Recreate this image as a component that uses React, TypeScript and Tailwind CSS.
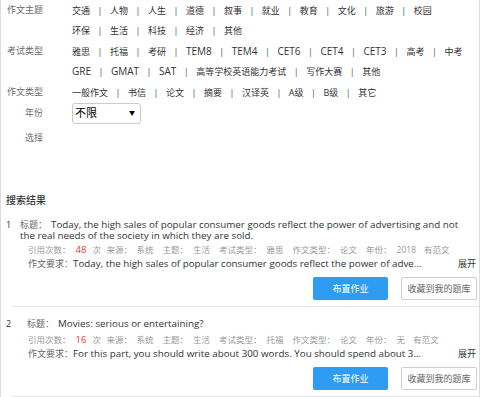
import React from 'react'

const font = "font-['Open_Sans','Noto_Sans_CJK_SC',sans-serif]"

const filters = [
    {
        label: '作文主题',
        rows: [
            ['交通', '人物', '人生', '道德', '叙事', '就业', '教育', '文化', '旅游', '校园'],
            ['环保', '生活', '科技', '经济', '其他'],
        ],
    },
    {
        label: '考试类型',
        rows: [
            ['雅思', '托福', '考研', 'TEM8', 'TEM4', 'CET6', 'CET4', 'CET3', '高考', '中考'],
            ['GRE', 'GMAT', 'SAT', '高等学校英语能力考试', '写作大赛', '其他'],
        ],
    },
    {
        label: '作文类型',
        rows: [['一般作文', '书信', '论文', '摘要', '汉译英', 'A级', 'B级', '其它']],
    },
]

const results = [
    {
        no: 1,
        title: 'Today, the high sales of popular consumer goods reflect the power of advertising and not the real needs of the society in which they are sold.',
        count: '48',
        exam: '雅思',
        year: '2018',
        req: 'Today, the high sales of popular consumer goods reflect the power of adve...',
        titleIndent: 'pl-0',
        top: 'mt-[12px]',
        metaTop: 'mt-[2.5px]',
    },
    {
        no: 2,
        title: 'Movies: serious or entertaining?',
        count: '16',
        exam: '托福',
        year: '无',
        req: 'For this part, you should write about 300 words. You should spend about 3...',
        titleIndent: 'pl-[7px]',
        top: 'mt-[10.5px]',
        metaTop: 'mt-[4.5px]',
    },
]

const Meta = ({ label, value }: { label: string; value: string }) => (
    <>
        <span className="ml-[9px]">{label}：</span>
        <span className="ml-[5px]">{value}</span>
    </>
)

const App: React.FC = () => {
    return (
        <div className={`w-[480px] h-[397px] overflow-hidden bg-white border-x border-[#dcdcdc] ${font}`}>
            {filters.map((f) => (
                <div key={f.label} className="flex">
                    <div className="w-[42px] shrink-0 text-right text-[9px] leading-[20.5px] text-[#6b6b6b]">{f.label}</div>
                    <div className="ml-[29px] flex flex-col">
                        {f.rows.map((row, i) => (
                            <div key={i} className="flex h-[20.5px] items-center text-[9px] text-[#333]">
                                {row.map((t, idx) => (
                                    <React.Fragment key={t}>
                                        {idx > 0 && <span className="mx-[7.5px] text-[#555]">|</span>}
                                        <span className={/^[A-Z]{2}/.test(t) ? 'text-[10px]' : ''}>{t}</span>
                                    </React.Fragment>
                                ))}
                            </div>
                        ))}
                    </div>
                </div>
            ))}

            <div className="flex items-center">
                <div className="w-[42px] shrink-0 text-right text-[9px] text-[#6b6b6b]">年份</div>
                <div className="ml-[29px] flex h-[21px] w-[69px] items-center justify-between rounded-[3px] border border-[#ccc] pl-[2px] pr-[5px] text-[11px] text-black">
                    <span>不限</span>
                    <span className="text-[6px]">▼</span>
                </div>
            </div>
            <div className="mt-[4px] flex h-[21px] items-center">
                <div className="w-[42px] shrink-0 text-right text-[9px] text-[#6b6b6b]">选择</div>
            </div>

            <div className="mt-[44px] h-[14px] pl-[5px] text-[10px] font-medium leading-[14px] text-[#333]">搜索结果</div>

            {results.map((r) => (
                <div key={r.no}>
                    <div className={`${r.top} flex text-[9px] leading-[11px]`}>
                        <div className="w-[19px] shrink-0 pl-[5px] text-[#333]">{r.no}</div>
                        <div className={`w-[448px] ${r.titleIndent} text-[#333]`}>
                            <span className="text-[#666]">标题：</span>
                            <span className="ml-[4px] text-[9.8px]">{r.title}</span>
                        </div>
                    </div>
                    <div className={`${r.metaTop} h-[14px] pl-[27px] text-[8.5px] leading-[14px] text-[#999] whitespace-nowrap`}>
                        <span>引用次数：</span>
                        <span className="ml-[5px] text-[9.5px] text-[#e4393c]">{r.count}</span>
                        <span className="ml-[6px]">次</span>
                        <span className="ml-[5.5px]">来源：</span>
                        <span className="ml-[4.5px]">系统</span>
                        <Meta label="主题" value="生活" />
                        <Meta label="考试类型" value={r.exam} />
                        <Meta label="作文类型" value="论文" />
                        <Meta label="年份" value={r.year} />
                        <span className="ml-[8px]">有范文</span>
                    </div>
                    <div className="flex h-[14px] items-center justify-between pl-[27px] pr-[3px] text-[9px] leading-[14px]">
                        <div className="whitespace-nowrap text-[#333]">
                            <span className="text-[#666]">作文要求：</span>
                            <span className="text-[9.8px]">{r.req}</span>
                        </div>
                        <span className="text-[#333]">展开</span>
                    </div>
                    <div className="mt-[6px] flex justify-end gap-[13px] pr-[2px] text-[9px]">
                        <button className="h-[23px] w-[75px] rounded-[2px] bg-[#2d9cf2] text-white">布置作业</button>
                        <button className="h-[23px] w-[76px] rounded-[2px] border border-[#cfcfcf] bg-white text-[#666]">收藏到我的题库</button>
                    </div>
                    <div className="ml-[11px] mt-[6px] h-px bg-[#e3e6ea]" />
                </div>
            ))}
        </div>
    )
}

export default App
